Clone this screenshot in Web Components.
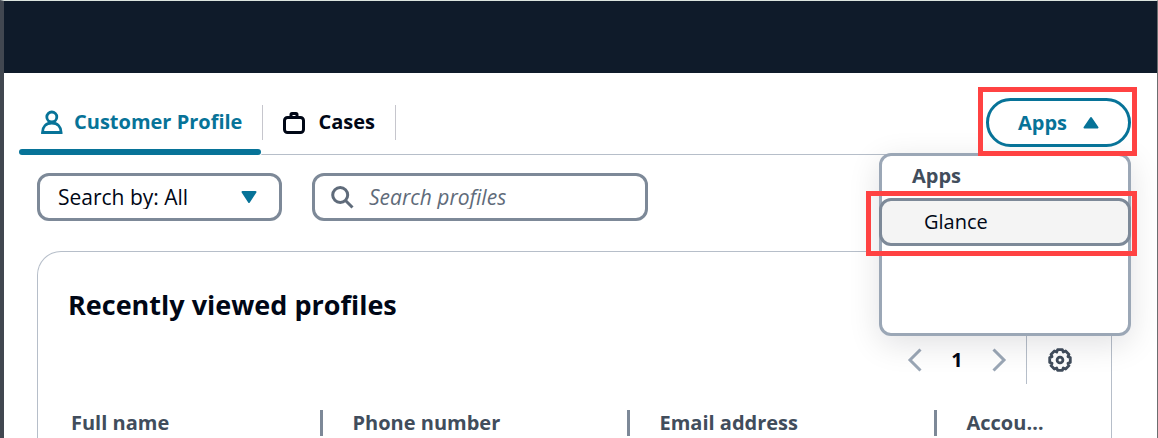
<!DOCTYPE html>
<html lang="en">
<head>
<meta charset="utf-8">
<title>Customer Profile</title>
<style>
    html {
        min-height: 100%;
        background-color: #ffffff;
    }

    body {
        margin: 0;
        font-family: "Open Sans", "Noto Sans", sans-serif;
        font-size: 20px;
        line-height: 24px;
        color: #000716;
    }
</style>
</head>
<body>
<agent-workspace>
    <tab-strip slot="tabs">
        <tab-item active>
            <svg slot="icon" width="24" height="26" viewBox="0 0 24 26" fill="none" stroke="currentColor" stroke-width="2.800">
                <circle cx="12.800" cy="8" r="5"/>
                <path d="M3.500 23.500c0-5.500 3.500-9.500 9.300-9.500s9.300 4 9.300 9.500z"/>
            </svg>
            Customer Profile
        </tab-item>
        <tab-item>
            <svg slot="icon" width="24" height="26" viewBox="0 0 24 26" fill="none" stroke="currentColor" stroke-width="3">
                <rect x="1.500" y="8.500" width="19" height="15" rx="3"/>
                <path d="M8 8V5.500q0-1 1-1h4q1 0 1 1V8"/>
            </svg>
            Cases
        </tab-item>
    </tab-strip>
    <apps-menu slot="apps"></apps-menu>
    <profile-search slot="search"></profile-search>
    <profile-panel></profile-panel>
</agent-workspace>

<template id="agent-workspace">
    <style>
        :host {
            display: flex;
            flex-direction: column;
            box-sizing: border-box;
            height: 100vh;
            overflow: hidden;
            border-top: 1px solid #dbe4de;
            border-left: 4px solid #414750;
            border-right: 1px solid #6b6e70;
        }

        header {
            flex: none;
            height: 72px;
            background-color: #0f1b2a;
        }

        nav {
            display: flex;
            align-items: stretch;
            flex: none;
            height: 81px;
            padding: 0 26px 0 15px;
        }

        ::slotted([slot="tabs"]) {
            flex: 1;
        }

        main {
            display: flex;
            flex-direction: column;
            flex: 1;
            gap: 30px;
            padding: 19px 45px 0 33px;
        }
    </style>
    <header></header>
    <nav>
        <slot name="tabs"></slot>
        <slot name="apps"></slot>
    </nav>
    <main>
        <slot name="search"></slot>
        <slot></slot>
    </main>
</template>

<template id="tab-strip">
    <style>
        :host {
            display: flex;
            border-bottom: 1px solid #b6bec9;
            margin-bottom: -1px;
        }
    </style>
    <slot></slot>
</template>

<template id="tab-item">
    <style>
        :host {
            display: flex;
            position: relative;
            padding-top: 32px;
        }

        a {
            display: flex;
            align-items: center;
            gap: 11px;
            box-sizing: border-box;
            height: 35px;
            padding: 0 20px 2px;
            border-right: 1px solid #c6c6cd;
            font-weight: 700;
            color: #000716;
            text-decoration: none;
            white-space: nowrap;
        }

        :host([active]) a {
            color: #077398;
        }

        :host([active])::after {
            content: "";
            position: absolute;
            left: 0;
            right: 2px;
            bottom: -1px;
            height: 6px;
            border-radius: 3px;
            background-color: #077398;
            box-shadow: 0 0 0 1px #ffffff;
        }
    </style>
    <a href="#">
        <slot name="icon"></slot>
        <span><slot></slot></span>
    </a>
</template>

<template id="apps-menu">
    <style>
        :host {
            display: block;
            position: relative;
            z-index: 1;
            width: 145px;
            padding-top: 25px;
        }

        button {
            font: inherit;
            cursor: pointer;
        }

        .trigger {
            position: relative;
            z-index: 1;
        }

        .trigger button {
            display: flex;
            align-items: center;
            justify-content: center;
            gap: 16px;
            box-sizing: border-box;
            width: 100%;
            height: 49px;
            border: 3px solid #077398;
            border-radius: 25px;
            background-color: #ffffff;
            font-weight: 700;
            color: #077398;
        }

        .mark {
            position: absolute;
            border: 5px solid #ff4242;
            pointer-events: none;
        }

        .trigger .mark {
            inset: -11px -6px -9px -8px;
        }

        .menu {
            position: absolute;
            top: 80px;
            right: 0;
            box-sizing: border-box;
            width: 252px;
            height: 183px;
            border: 3px solid #9ba7b6;
            border-radius: 12px;
            background-color: #ffffff;
            box-shadow: 0 8px 32px rgba(0, 7, 22, 0.12);
        }

        h3 {
            margin: 0;
            padding: 8px 30px 10px;
            font-size: 20px;
            font-weight: 700;
            color: #414d5c;
        }

        .item {
            position: relative;
            margin: 0 -3px;
        }

        .item button {
            display: block;
            box-sizing: border-box;
            width: 100%;
            height: 48px;
            padding: 0 42px;
            border: 3px solid #7d8998;
            border-radius: 12px;
            background-color: #f4f4f4;
            text-align: left;
            color: #000716;
        }

        .item .mark {
            inset: -7px -6px -10px -13px;
        }
    </style>
    <div class="trigger">
        <button type="button" aria-expanded="true">
            Apps
            <svg width="16" height="14" viewBox="0 0 16 14" fill="currentColor" stroke="currentColor" stroke-width="2" stroke-linejoin="round">
                <path d="M8 2l6.500 9.500h-13z"/>
            </svg>
        </button>
        <div class="mark"></div>
    </div>
    <div class="menu">
        <h3>Apps</h3>
        <div class="item">
            <button type="button">Glance</button>
            <div class="mark"></div>
        </div>
    </div>
</template>

<template id="profile-search">
    <style>
        :host {
            display: flex;
            gap: 30px;
            font-size: 21px;
        }

        label {
            display: flex;
            align-items: center;
            box-sizing: border-box;
            height: 48px;
            border: 3px solid #7d8998;
            border-radius: 12px;
            background-color: #ffffff;
        }

        .filter {
            display: grid;
            width: 245px;
        }

        .filter select,
        .filter svg {
            grid-area: 1 / 1;
        }

        .filter svg {
            justify-self: end;
            margin-right: 22px;
            color: #077398;
            pointer-events: none;
        }

        .query {
            gap: 14px;
            width: 336px;
            padding: 0 16px;
            color: #5f6b7a;
        }

        select,
        input {
            appearance: none;
            min-width: 0;
            margin: 0;
            border: 0;
            outline: 0;
            background: none;
            font: inherit;
            color: #000716;
        }

        select {
            padding: 0 18px;
        }

        input {
            flex: 1;
            padding: 0;
        }

        input::placeholder {
            font-style: italic;
            color: #5f6b7a;
            opacity: 1;
        }
    </style>
    <label class="filter">
        <select aria-label="Search by">
            <option>Search by: All</option>
        </select>
        <svg width="16" height="14" viewBox="0 0 16 14" fill="currentColor" stroke="currentColor" stroke-width="2" stroke-linejoin="round">
            <path d="M8 12l6.500-10h-13z"/>
        </svg>
    </label>
    <label class="query">
        <svg width="24" height="24" viewBox="0 0 24 24" fill="none" stroke="currentColor" stroke-width="3">
            <circle cx="9.200" cy="10" r="7.500"/>
            <path d="M14.500 15.500l7 7"/>
        </svg>
        <input type="text" placeholder="Search profiles" aria-label="Search profiles">
    </label>
</template>

<template id="profile-panel">
    <style>
        :host {
            display: flex;
            flex-direction: column;
            flex: 1;
            border: 1px solid #b6bec9;
            border-bottom: 0;
            border-radius: 24px 24px 0 0;
        }

        h2 {
            margin: 0;
            padding: 35px 30px 13px;
            font-size: 27px;
            line-height: 36px;
            font-weight: 700;
        }

        .tools {
            display: flex;
            justify-content: flex-end;
            align-items: center;
            height: 48px;
            padding-right: 33px;
        }

        button {
            display: flex;
            align-items: center;
            justify-content: center;
            width: 24px;
            height: 32px;
            padding: 0;
            border: 0;
            background: none;
            color: #9ba7b6;
            cursor: pointer;
        }

        .page {
            width: 60px;
            text-align: center;
            font-weight: 700;
        }

        .settings {
            display: flex;
            align-items: center;
            height: 48px;
            margin-left: 15px;
            padding: 0 6px 0 21px;
            border-left: 1px solid #b6bec9;
        }

        .settings button {
            color: #414d5c;
        }

        table {
            width: 100%;
            margin-top: 26px;
            border-collapse: collapse;
            table-layout: fixed;
        }

        th {
            height: 26px;
            padding: 0 30px;
            border-right: 3px solid #7d8998;
            font-weight: 700;
            line-height: 26px;
            text-align: left;
            white-space: nowrap;
            color: #414d5c;
        }

        th:first-child {
            padding-left: 33px;
        }

        th:last-child {
            border-right: 0;
        }
    </style>
    <h2>Recently viewed profiles</h2>
    <div class="tools">
        <button type="button" aria-label="Previous page">
            <svg width="16" height="24" viewBox="0 0 16 24" fill="none" stroke="currentColor" stroke-width="3">
                <path d="M13.500 1.500L3 12l10.500 10.500"/>
            </svg>
        </button>
        <span class="page">1</span>
        <button type="button" aria-label="Next page">
            <svg width="16" height="24" viewBox="0 0 16 24" fill="none" stroke="currentColor" stroke-width="3">
                <path d="M2.500 1.500L13 12 2.500 22.500"/>
            </svg>
        </button>
        <div class="settings">
            <button type="button" aria-label="Settings">
                <svg width="24" height="24" viewBox="0 0 24 24" fill="none" stroke="currentColor" stroke-width="2.800" stroke-linejoin="round">
                    <path d="M9.600 1.700H14.400L15.300 4.050 17.600 3 21 6.400 19.950 8.700 22.300 9.600V14.400L19.950 15.300 21 17.600 17.600 21 15.300 19.950 14.400 22.300H9.600L8.700 19.950 6.400 21 3 17.600 4.050 15.300 1.700 14.400V9.600L4.050 8.700 3 6.400 6.400 3 8.700 4.050z"/>
                    <circle cx="12" cy="12" r="2.900"/>
                </svg>
            </button>
        </div>
    </div>
    <table>
        <colgroup>
            <col style="width: 283px">
            <col style="width: 307px">
            <col style="width: 307px">
            <col>
        </colgroup>
        <thead>
            <tr>
                <th scope="col">Full name</th>
                <th scope="col">Phone number</th>
                <th scope="col">Email address</th>
                <th scope="col">Accou…</th>
            </tr>
        </thead>
    </table>
</template>

<script>
    function define(name) {
        const template = document.getElementById(name);

        customElements.define(name, class extends HTMLElement {
            constructor() {
                super();
                const shadowRoot = this.attachShadow({ mode: "open" });
                shadowRoot.appendChild(template.content.cloneNode(true));
            }
        });
    }

    define("agent-workspace");
    define("tab-strip");
    define("tab-item");
    define("apps-menu");
    define("profile-search");
    define("profile-panel");
</script>
</body>
</html>
